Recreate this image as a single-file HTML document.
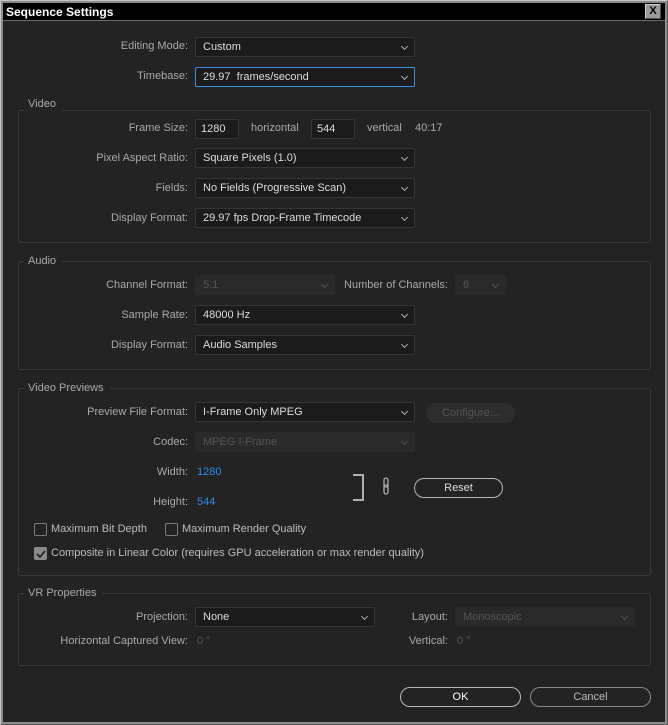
<!DOCTYPE html>
<html><head><meta charset="utf-8"><style>
*{box-sizing:border-box;margin:0;padding:0}
body{width:668px;height:725px;background:#232323;font-family:"Liberation Sans",sans-serif;font-size:11px;color:#a9a9a9;position:relative;overflow:hidden}
.win{position:absolute;left:0;top:0;width:668px;height:725px;border:1px solid #c8c8c8;border-right-color:#5a5a5a;border-bottom-color:#5a5a5a}
.win2{position:absolute;left:1px;top:1px;right:1px;bottom:1px;border:2px solid #8a8a8a}
.title{position:absolute;left:3px;top:3px;width:662px;height:18px;background:#000;color:#fff;font-weight:bold;font-size:12px;line-height:18px;padding-left:3px;border-bottom:1px solid #6a6a6a}
.close{position:absolute;left:645px;top:4px;width:16px;height:15px;background:#9a9a9a;border:1px solid #d0d0d0;border-right-color:#505050;border-bottom-color:#505050;color:#000;font-weight:bold;font-size:11px;line-height:12px;text-align:center}
.a{position:absolute;white-space:nowrap;line-height:14px}
.l{text-align:right;color:#a9a9a9}
.dd{position:absolute;height:20px;background:#1b1b1b;border:1px solid #363636;border-radius:2px;color:#dcdcdc;padding-left:7px;line-height:18px;white-space:nowrap}
.dd:after{content:"";position:absolute;right:7px;top:6px;width:4px;height:4px;border-right:1px solid #b0b0b0;border-bottom:1px solid #b0b0b0;transform:rotate(45deg)}
.dis{background:#2a2a2a;border-color:#2a2a2a;color:#555}
.dis:after{border-color:#555}
.inp{position:absolute;height:20px;background:#1b1b1b;border:1px solid #363636;border-radius:2px;color:#dcdcdc;padding-left:5px;line-height:18px}
.grp{position:absolute;border:1px solid #3a3a3a;border-radius:3px}
.gl{position:absolute;background:#232323;padding:0 6px 0 4px;color:#a9a9a9;line-height:14px}
.btn{position:absolute;height:20px;border:1px solid #b8b8b8;border-radius:10px;color:#dcdcdc;text-align:center;line-height:18px}
.cb{position:absolute;width:13px;height:13px;border:1px solid #7a7a7a;border-radius:2px}
.blue{color:#2d8ceb}
</style></head><body>
<div class="win"></div><div class="win2"></div>
<div class="title">Sequence Settings</div>
<div class="close">X</div>

<div class="a l" style="right:480px;top:39px">Editing Mode:</div>
<div class="dd" style="left:195px;top:37px;width:220px">Custom</div>
<div class="a l" style="right:480px;top:69px">Timebase:</div>
<div class="dd" style="left:195px;top:67px;width:220px;border-color:#3b8fe0">29.97&nbsp; frames/second</div>

<div class="grp" style="left:18px;top:110px;width:633px;height:133px"></div>
<div class="gl" style="left:24px;top:97px">Video</div>
<div class="a l" style="right:480px;top:121px">Frame Size:</div>
<div class="inp" style="left:195px;top:119px;width:44px">1280</div>
<div class="a" style="left:251px;top:121px">horizontal</div>
<div class="inp" style="left:311px;top:119px;width:44px">544</div>
<div class="a" style="left:367px;top:121px">vertical</div>
<div class="a" style="left:415px;top:121px">40:17</div>
<div class="a l" style="right:480px;top:151px">Pixel Aspect Ratio:</div>
<div class="dd" style="left:195px;top:148px;width:220px">Square Pixels (1.0)</div>
<div class="a l" style="right:480px;top:181px">Fields:</div>
<div class="dd" style="left:195px;top:178px;width:220px">No Fields (Progressive Scan)</div>
<div class="a l" style="right:480px;top:211px">Display Format:</div>
<div class="dd" style="left:195px;top:208px;width:220px">29.97 fps Drop-Frame Timecode</div>

<div class="grp" style="left:18px;top:261px;width:633px;height:109px"></div>
<div class="gl" style="left:24px;top:254px">Audio</div>
<div class="a l" style="right:480px;top:278px">Channel Format:</div>
<div class="dd dis" style="left:195px;top:275px;width:140px">5.1</div>
<div class="a l" style="right:220px;top:278px">Number of Channels:</div>
<div class="dd dis" style="left:455px;top:275px;width:51px">6</div>
<div class="a l" style="right:480px;top:308px">Sample Rate:</div>
<div class="dd" style="left:195px;top:305px;width:220px">48000 Hz</div>
<div class="a l" style="right:480px;top:338px">Display Format:</div>
<div class="dd" style="left:195px;top:335px;width:220px">Audio Samples</div>

<div class="grp" style="left:18px;top:388px;width:633px;height:188px"></div>
<div class="gl" style="left:24px;top:381px">Video Previews</div>
<div class="a l" style="right:480px;top:405px">Preview File Format:</div>
<div class="dd" style="left:195px;top:402px;width:220px">I-Frame Only MPEG</div>
<div class="btn" style="left:426px;top:403px;width:89px;border-color:#2d2d2d;background:#2d2d2d;color:#555">Configure...</div>
<div class="a l" style="right:480px;top:435px">Codec:</div>
<div class="dd dis" style="left:195px;top:432px;width:220px">MPEG I-Frame</div>
<div class="a l" style="right:480px;top:465px">Width:</div>
<div class="a blue" style="left:197px;top:465px">1280</div>
<div class="a l" style="right:480px;top:495px">Height:</div>
<div class="a blue" style="left:197px;top:495px">544</div>
<svg style="position:absolute;left:350px;top:472px" width="50" height="32"><path d="M3 3H13V28H3" fill="none" stroke="#b0b0b0" stroke-width="2"/><path d="M34 8v5a2 2 0 0 0 4 0v-5a2 2 0 0 0-4 0zM34 15v5a2 2 0 0 0 4 0v-5a2 2 0 0 0-4 0z" fill="none" stroke="#b0b0b0" stroke-width="1.3"/></svg>
<div class="btn" style="left:414px;top:478px;width:89px">Reset</div>
<div class="cb" style="left:34px;top:523px"></div>
<div class="a" style="left:51px;top:522px;color:#bcbcbc">Maximum Bit Depth</div>
<div class="cb" style="left:165px;top:523px"></div>
<div class="a" style="left:182px;top:522px;color:#bcbcbc">Maximum Render Quality</div>
<div class="cb" style="left:34px;top:547px;background:#8a8a8a;border-color:#8a8a8a"></div>
<svg style="position:absolute;left:34px;top:547px" width="13" height="13"><path d="M3 7l3 3 5-6" fill="none" stroke="#1b1b1b" stroke-width="1.6"/></svg>
<div class="a" style="left:51px;top:546px;color:#bcbcbc">Composite in Linear Color (requires GPU acceleration or max render quality)</div>

<div class="grp" style="left:18px;top:593px;width:633px;height:73px"></div>
<div class="gl" style="left:24px;top:586px">VR Properties</div>
<div class="a l" style="right:480px;top:610px">Projection:</div>
<div class="dd" style="left:195px;top:607px;width:180px">None</div>
<div class="a l" style="right:220px;top:610px">Layout:</div>
<div class="dd dis" style="left:455px;top:607px;width:180px">Monoscopic</div>
<div class="a l" style="right:480px;top:634px">Horizontal Captured View:</div>
<div class="a" style="left:197px;top:634px;color:#555">0 °</div>
<div class="a l" style="right:220px;top:634px">Vertical:</div>
<div class="a" style="left:457px;top:634px;color:#555">0 °</div>

<div class="btn" style="left:400px;top:687px;width:121px;color:#fff">OK</div>
<div class="btn" style="left:530px;top:687px;width:121px;border-color:#8a8a8a;color:#bcbcbc">Cancel</div>
</body></html>
